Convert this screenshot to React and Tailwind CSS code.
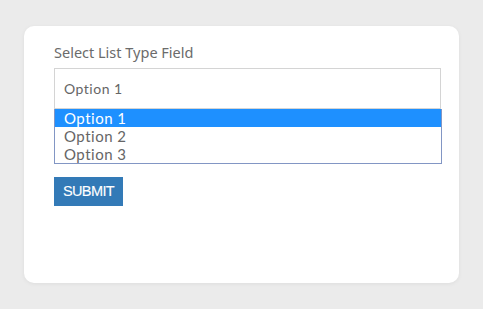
import React from 'react';

export default function App() {
    const options = ['Option 1', 'Option 2', 'Option 3'];

    return (
        <div className="w-[483px] h-[309px] bg-[#ebebeb] pt-[26px] pl-[24px]" style={{ fontFamily: '"Noto Sans", sans-serif' }}>
            <div className="w-[435px] h-[257px] bg-white rounded-[10px] shadow-[0_1px_4px_rgba(0,0,0,0.06)] pt-[16px] pl-[30px]">
                <label className="block text-[14.5px] leading-[20px] text-[#6b6b6b]">Select List Type Field</label>

                <div className="mt-[6px] w-[387px] tracking-[0.5px]" style={{ fontFamily: 'Lato, sans-serif' }}>
                    <div className="h-[41px] border border-[#d4d4d4] bg-white flex items-center pl-[9px] text-[14px] text-[#666]">
                        Option 1
                    </div>
                    <div className="w-[388px] border border-[#8296c4] border-t-0 bg-white">
                        {options.map((opt, i) => (
                            <div
                                key={opt}
                                className={i === 0
                                    ? 'h-[18px] leading-[18px] pl-[9px] text-[15px] bg-[#1e90ff] text-white'
                                    : 'h-[18px] leading-[18px] pl-[9px] text-[15px] text-[#666]'}
                            >
                                {opt}
                            </div>
                        ))}
                    </div>
                </div>

                <button type="button" className="mt-[13px] w-[69px] h-[29px] bg-[#337ab7] text-white text-[14.5px] tracking-[-0.6px]" style={{ fontFamily: '"Liberation Sans", Arial, sans-serif', WebkitTextStroke: '0.12px white' }}>
                    SUBMIT
                </button>
            </div>
        </div>
    );
}
